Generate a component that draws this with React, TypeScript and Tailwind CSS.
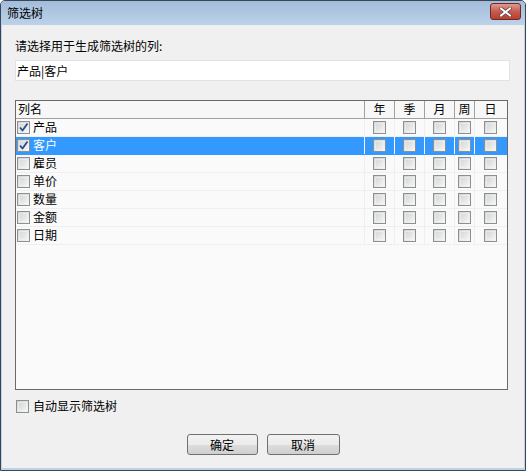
import React from "react";

const font = { fontFamily: '"Noto Sans CJK SC", "Noto Sans", sans-serif' };

function Box({ checked }: { checked?: boolean }) {
  return (
    <div className="relative w-[13px] h-[13px] shrink-0 border border-[#8e8f8f] bg-[linear-gradient(135deg,#cfd1d3,#f7f7f7)]">
      <div className="absolute inset-[1px] border border-[#f4f4f4]/60" />
      {checked && (
        <svg className="absolute left-[0px] top-[0px]" width="11" height="11" viewBox="0 0 11 11">
          <path d="M2 5.5 L4.5 8.5 L9.5 1.5" fill="none" stroke="#2c4a92" strokeWidth="1.8" strokeLinejoin="round" />
        </svg>
      )}
    </div>
  );
}

const rows = [
  { name: "产品", checked: true },
  { name: "客户", checked: true, selected: true },
  { name: "雇员" },
  { name: "单价" },
  { name: "数量" },
  { name: "金额" },
  { name: "日期" },
];

const subCols = [
  { label: "年", w: "w-[30px]" },
  { label: "季", w: "w-[30px]" },
  { label: "月", w: "w-[30px]" },
  { label: "周", w: "w-[20px]" },
  { label: "日", w: "w-[31px]" },
];

export default function App() {
  return (
    <div className="w-[526px] h-[471px] text-[12px] text-black" style={font}>
      <div className="w-full h-full flex flex-col border border-[#3b4654] rounded-t-[5px] bg-[#bdd3ea] overflow-hidden">
        {/* title bar */}
        <div className="h-[24px] shrink-0 flex items-center justify-between pl-[6px] pr-[4px] bg-[linear-gradient(#a3bcd9,#bcd2ea)]">
          <span className="text-[12px] leading-none text-black">筛选树</span>
          <div className="w-[31px] h-[17px] mt-[-3px] rounded-[3px] border border-[#6b2a25] bg-[linear-gradient(#e09a90,#c75b4d_50%,#b9402f)] flex items-center justify-center">
            <svg width="13" height="10" viewBox="0 0 13 10">
              <path d="M2 1.5 L11 8.5 M11 1.5 L2 8.5" stroke="#5a3a38" strokeWidth="3.4" strokeLinecap="square" />
              <path d="M2 1.5 L11 8.5 M11 1.5 L2 8.5" stroke="#ffffff" strokeWidth="2" strokeLinecap="square" />
            </svg>
          </div>
        </div>
        {/* content */}
        <div className="flex-1 mx-[1px] mb-[2px] bg-[#f0f0f0] flex flex-col pl-[13px] pr-[13px] pt-[13px]">
          <div className="h-[16px] leading-[16px]">请选择用于生成筛选树的列:</div>
          <div className="mt-[6px] h-[21px] w-[495px] border border-[#dfe3e8] bg-white flex items-center pl-[1px]">
            产品|客户
          </div>
          <div className="mt-[19px] h-[290px] w-[493px] border border-[#6a6a6a] bg-[#fafafa] flex flex-col">
            <div className="h-[18px] flex border-b border-[#a0a0a0] bg-[#f7f7f7]">
              <div className="w-[349px] pl-[2px] leading-[16px] border-r border-[#a0a0a0]">列名</div>
              {subCols.map((c, i) => (
                <div
                  key={c.label}
                  className={`${c.w} text-center leading-[16px] ${i < subCols.length - 1 ? "border-r border-[#a0a0a0]" : ""}`}
                >
                  {c.label}
                </div>
              ))}
            </div>
            {rows.map((r) => (
              <div
                key={r.name}
                className={`h-[18px] flex border-b ${r.selected ? "bg-[#3399ff] text-white border-[#3399ff]" : "border-[#efefef]"}`}
              >
                <div className={`w-[349px] flex items-center pl-[1px] gap-[3px] border-r ${r.selected ? "border-white" : "border-[#efefef]"}`}>
                  <Box checked={r.checked} />
                  <span className="leading-[16px] mt-[-2px]">{r.name}</span>
                </div>
                {subCols.map((c, i) => (
                  <div
                    key={c.label}
                    className={`${c.w} flex items-center justify-center ${i < subCols.length - 1 ? (r.selected ? "border-r border-white" : "border-r border-[#efefef]") : ""}`}
                  >
                    <Box />
                  </div>
                ))}
              </div>
            ))}
          </div>
          <div className="mt-[10px] h-[13px] flex items-center gap-[4px] pl-[1px]">
            <Box />
            <span className="leading-[16px] mt-[-1px]">自动显示筛选树</span>
          </div>
          <div className="mt-[21px] flex justify-center gap-[9px] pl-[0px]">
            <button className="w-[71px] h-[21px] rounded-[3px] border border-[#707070] bg-[linear-gradient(#f2f2f2,#ebebeb_50%,#dddddd_51%,#cfcfcf)] text-[12px] leading-none text-black">
              确定
            </button>
            <button className="w-[73px] h-[21px] rounded-[3px] border border-[#707070] bg-[linear-gradient(#f2f2f2,#ebebeb_50%,#dddddd_51%,#cfcfcf)] text-[12px] leading-none text-black">
              取消
            </button>
          </div>
        </div>
      </div>
    </div>
  );
}
